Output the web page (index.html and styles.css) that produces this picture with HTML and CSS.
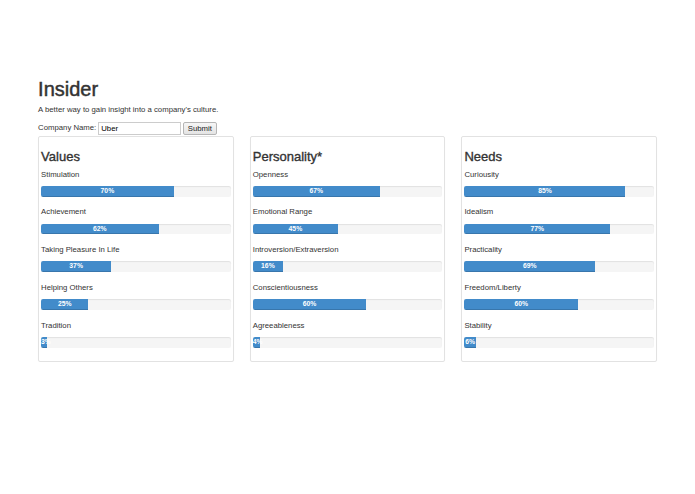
FILE: index.html
```html
<!DOCTYPE html>
<html lang="en">
<head>
    <meta charset="UTF-8">
    <meta name="viewport" content="width=device-width, initial-scale=1.0">
    <title>Insider</title>
    <link rel="stylesheet" href="styles.css">
</head>
<body>
    <div class="container">
        <h1>Insider</h1>
        <p class="lead">A better way to gain insight into a company's culture.</p>

        <form class="search-form">
            <label for="company">Company Name:</label>
            <input type="text" id="company" value="Uber">
            <button type="button">Submit</button>
        </form>

        <div class="row">
            <!-- Values -->
            <div class="panel">
                <h3>Values</h3>
                <p class="trait">Stimulation</p>
                <div class="progress"><div class="progress-bar" style="width: 70%">70%</div></div>
                <p class="trait">Achievement</p>
                <div class="progress"><div class="progress-bar" style="width: 62%">62%</div></div>
                <p class="trait">Taking Pleasure In Life</p>
                <div class="progress"><div class="progress-bar" style="width: 37%">37%</div></div>
                <p class="trait">Helping Others</p>
                <div class="progress"><div class="progress-bar" style="width: 25%">25%</div></div>
                <p class="trait">Tradition</p>
                <div class="progress"><div class="progress-bar" style="width: 3%">3%</div></div>
            </div>

            <!-- Personality -->
            <div class="panel">
                <h3>Personality*</h3>
                <p class="trait">Openness</p>
                <div class="progress"><div class="progress-bar" style="width: 67%">67%</div></div>
                <p class="trait">Emotional Range</p>
                <div class="progress"><div class="progress-bar" style="width: 45%">45%</div></div>
                <p class="trait">Introversion/Extraversion</p>
                <div class="progress"><div class="progress-bar" style="width: 16%">16%</div></div>
                <p class="trait">Conscientiousness</p>
                <div class="progress"><div class="progress-bar" style="width: 60%">60%</div></div>
                <p class="trait">Agreeableness</p>
                <div class="progress"><div class="progress-bar" style="width: 4%">4%</div></div>
            </div>

            <!-- Needs -->
            <div class="panel">
                <h3>Needs</h3>
                <p class="trait">Curiousity</p>
                <div class="progress"><div class="progress-bar" style="width: 85%">85%</div></div>
                <p class="trait">Idealism</p>
                <div class="progress"><div class="progress-bar" style="width: 77%">77%</div></div>
                <p class="trait">Practicality</p>
                <div class="progress"><div class="progress-bar" style="width: 69%">69%</div></div>
                <p class="trait">Freedom/Liberty</p>
                <div class="progress"><div class="progress-bar" style="width: 60%">60%</div></div>
                <p class="trait">Stability</p>
                <div class="progress"><div class="progress-bar" style="width: 6%">6%</div></div>
            </div>
        </div>
    </div>
</body>
</html>
```

FILE: styles.css
```css
/* Base Styles */
* {
    box-sizing: border-box;
    margin: 0;
    padding: 0;
}

body {
    font-family: 'Liberation Sans', Arial, sans-serif;
    font-size: 7.75px;
    line-height: 10.8px;
    color: #333;
    background: #fff;
}

.container {
    width: 635px;
    margin: 0 auto;
    padding: 78.5px 8.1px 0;
}

/* Header */
h1 {
    font-size: 20px;
    font-weight: normal;
    line-height: 21.5px;
    margin-bottom: 5.4px;
    -webkit-text-stroke: 0.45px #333;
}

.lead {
    margin-bottom: 5.5px;
}

/* Search Form */
.search-form {
    display: flex;
    align-items: center;
    height: 13.6px;
    margin-bottom: 1.2px;
}

.search-form label {
    margin-right: 2px;
}

.search-form input {
    width: 83px;
    height: 13.6px;
    padding: 0 2px;
    border: 1px solid #ccc;
    font-family: inherit;
    font-size: 7.75px;
    color: #000;
}

.search-form button {
    height: 13.6px;
    margin-left: 1.5px;
    padding: 0 4px;
    border: 1px solid #b5b5b5;
    border-radius: 2px;
    background: linear-gradient(#f6f6f6, #e4e4e4);
    font-family: inherit;
    font-size: 7.75px;
    color: #222;
}

/* Panels */
.row {
    display: grid;
    grid-template-columns: 1fr 1fr 1fr;
    gap: 16.2px;
}

.panel {
    border: 1px solid #e2e2e2;
    border-radius: 2px;
    padding: 1.6px 2px 2.4px;
    box-shadow: 0 1px 1px rgba(0,0,0,0.04);
}

.panel h3 {
    font-size: 13px;
    font-weight: normal;
    line-height: 14.3px;
    margin: 10.8px 0 5.4px;
    -webkit-text-stroke: 0.35px #333;
}

.trait {
    margin-bottom: 5.4px;
}

/* Progress Bars */
.progress {
    height: 10.8px;
    margin-bottom: 10.8px;
    background: #f5f5f5;
    border-radius: 2.2px;
    overflow: hidden;
    box-shadow: inset 0 1px 1px rgba(0,0,0,0.08);
}

.progress-bar {
    height: 100%;
    background: #428bca;
    color: #fff;
    font-size: 6.8px;
    font-weight: bold;
    line-height: 10.8px;
    text-align: center;
    white-space: nowrap;
    box-shadow: inset 0 -1px 0 rgba(0,0,0,0.15);
}
```
